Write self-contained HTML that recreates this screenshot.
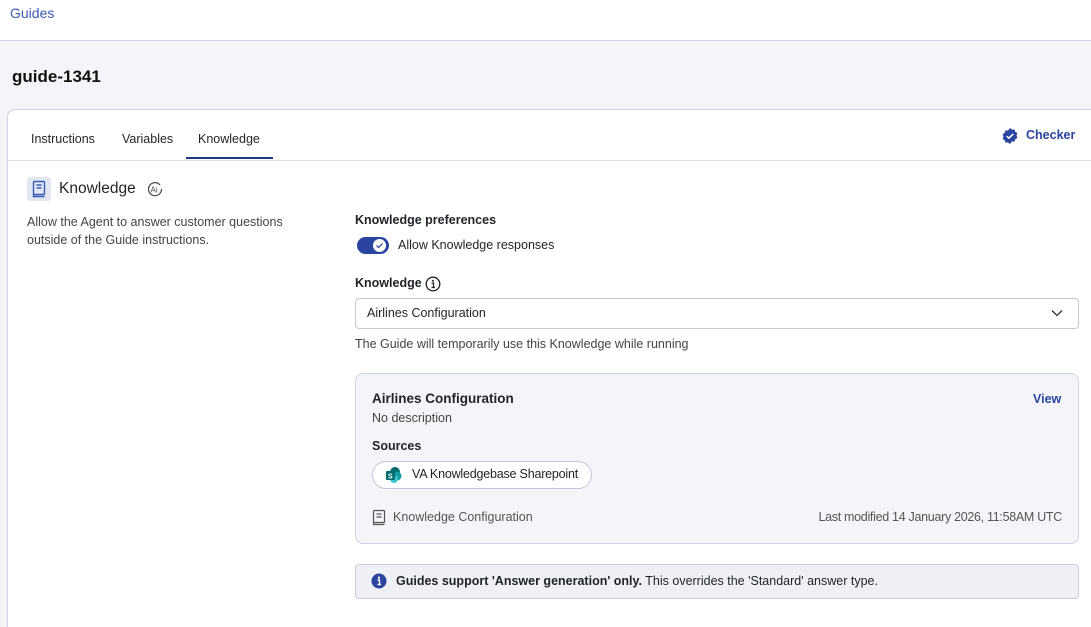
<!DOCTYPE html>
<html><head><meta charset="utf-8"><style>
*{box-sizing:border-box;margin:0;padding:0}
html,body{width:1091px;height:627px;overflow:hidden}
body{background:#f4f5f9;font-family:"Liberation Sans",sans-serif;color:#1f2328;position:relative}
.abs{position:absolute}
.top{left:0;top:0;width:1091px;height:41px;background:#fff;border-bottom:1px solid #cfd4e2}
.card{left:7px;top:109px;width:1100px;height:540px;background:#fff;border:1px solid #cfd4e2;border-radius:8px}
.t{position:absolute;font-size:12.5px;white-space:nowrap}
</style></head><body>
<div class="abs top"><div class="t" style="left:10px;top:5px;color:#3b5bb5;font-size:14px">Guides</div></div>
<div class="t" style="left:12px;top:67px;font-size:17px;font-weight:bold;color:#111">guide-1341</div>
<div class="abs card"></div>
<div class="t" style="left:31px;top:132px">Instructions</div>
<div class="t" style="left:122px;top:132px">Variables</div>
<div class="t" style="left:198px;top:132px">Knowledge</div>
<div class="abs" style="left:186px;top:157px;width:87px;height:2px;background:#1e3a8a"></div>
<div class="abs" style="left:8px;top:160px;width:1083px;height:1px;background:#dde1ea"></div>
<svg class="abs" style="left:1001px;top:127px" width="18" height="18" viewBox="0 0 18 18"><path d="M9 1l2 1.6 2.5-.2.7 2.4 2.2 1.3-.9 2.4.9 2.4-2.2 1.3-.7 2.4-2.5-.2L9 17l-2-1.6-2.5.2-.7-2.4-2.2-1.3.9-2.4-.9-2.4 2.2-1.3.7-2.4 2.5.2z" fill="#2a44a0"/><path d="M5.8 9.2l2.2 2 4.2-4.3" stroke="#fff" stroke-width="1.6" fill="none"/></svg>
<div class="t" style="left:1026px;top:128px;color:#2a44a0;font-weight:bold">Checker</div>
<div class="abs" style="left:27px;top:177px;width:24px;height:24px;background:#e3e7f1;border-radius:3px"></div>
<svg class="abs" style="left:31px;top:180px" width="16" height="18" viewBox="0 0 16 18"><rect x="2.5" y="1.5" width="11" height="13" rx="1" fill="none" stroke="#3b5bb5" stroke-width="1.4"/><path d="M2.5 14.5v2h11M5.5 5h5M5.5 8h5" stroke="#3b5bb5" stroke-width="1.4" fill="none"/></svg>
<div class="t" style="left:59px;top:180px;font-size:15.5px">Knowledge</div>
<svg class="abs" style="left:147px;top:181px" width="16" height="16" viewBox="0 0 16 16"><path d="M13 4A6.5 6.5 0 1 0 14.5 8" stroke="#444" stroke-width="1.2" fill="none"/><text x="3.5" y="11.5" font-size="8" font-family="Liberation Sans" fill="#444">Ai</text></svg>
<div class="t" style="left:27px;top:213px;color:#444;line-height:18px">Allow the Agent to answer customer questions<br>outside of the Guide instructions.</div>
<div class="t" style="left:355px;top:213px;font-weight:bold">Knowledge preferences</div>
<div class="abs" style="left:357px;top:237px;width:32px;height:17px;background:#2a44a0;border-radius:9px"></div>
<div class="abs" style="left:373px;top:239px;width:13px;height:13px;background:#fff;border-radius:50%"></div>
<svg class="abs" style="left:375px;top:241px" width="9" height="9"><path d="M1.5 4.5l2 2 4-4" stroke="#2a44a0" stroke-width="1.2" fill="none"/></svg>
<div class="t" style="left:398px;top:238px">Allow Knowledge responses</div>
<div class="t" style="left:355px;top:276px;font-weight:bold">Knowledge</div>
<svg class="abs" style="left:425px;top:276px" width="16" height="16"><circle cx="8" cy="8" r="6.8" stroke="#222" stroke-width="1.3" fill="none"/><circle cx="8" cy="4.8" r="1" fill="#222"/><path d="M6.5 7h2v4.5M6.5 11.5h3.5" stroke="#222" stroke-width="1.3" fill="none"/></svg>
<div class="abs" style="left:355px;top:298px;width:724px;height:31px;border:1px solid #c3c8d4;border-radius:4px;background:#fff"></div>
<div class="t" style="left:367px;top:306px">Airlines Configuration</div>
<svg class="abs" style="left:1051px;top:308px" width="12" height="10"><path d="M1 2.5l5 5 5-5" stroke="#333" stroke-width="1.3" fill="none"/></svg>
<div class="t" style="left:355px;top:337px;color:#444">The Guide will temporarily use this Knowledge while running</div>
<div class="abs" style="left:355px;top:373px;width:724px;height:171px;border:1px solid #cfd4e0;border-radius:8px;background:#f4f5f9"></div>
<div class="t" style="left:372px;top:391px;font-size:13.5px;font-weight:bold">Airlines Configuration</div>
<div class="t" style="left:1033px;top:392px;color:#2a44a0;font-weight:bold">View</div>
<div class="t" style="left:372px;top:411px;color:#444">No description</div>
<div class="t" style="left:372px;top:439px;font-weight:bold">Sources</div>
<div class="abs" style="left:372px;top:461px;width:220px;height:28px;border:1px solid #c3c8d4;border-radius:14px;background:#fff"></div>
<svg class="abs" style="left:385px;top:466px" width="18" height="18"><circle cx="10" cy="6" r="5" fill="#036c70"/><circle cx="12" cy="10" r="4.5" fill="#1a9ba1"/><circle cx="9" cy="13" r="4" fill="#37c6d0"/><rect x="1" y="5" width="9" height="9" rx="1" fill="#036c70"/><text x="3" y="12.5" font-size="7" fill="#fff" font-family="Liberation Sans" font-weight="bold">S</text></svg>
<div class="t" style="left:412px;top:467px;letter-spacing:-0.2px">VA Knowledgebase Sharepoint</div>
<svg class="abs" style="left:372px;top:509px" width="14" height="17" viewBox="0 0 14 17"><rect x="1.5" y="1.5" width="11" height="12" rx="1" fill="none" stroke="#555" stroke-width="1.2"/><path d="M1.5 13.5v2h11M4.5 5h5M4.5 8h5" stroke="#555" stroke-width="1.2" fill="none"/></svg>
<div class="t" style="left:393px;top:510px;color:#555">Knowledge Configuration</div>
<div class="t" style="right:29px;top:510px;color:#555;letter-spacing:-0.3px">Last modified 14 January 2026, 11:58AM UTC</div>
<div class="abs" style="left:355px;top:564px;width:724px;height:35px;border:1px solid #c8cdd9;border-radius:4px;background:#eef0f5"></div>
<svg class="abs" style="left:371px;top:573px" width="16" height="16"><circle cx="8" cy="8" r="7.5" fill="#2a44a0"/><circle cx="8" cy="4.6" r="1.1" fill="#fff"/><path d="M6.5 7h2v4.5M6.5 11.5h3.5" stroke="#fff" stroke-width="1.4" fill="none"/></svg>
<div class="t" style="left:396px;top:574px"><b>Guides support 'Answer generation' only.</b> This overrides the 'Standard' answer type.</div>
</body></html>
